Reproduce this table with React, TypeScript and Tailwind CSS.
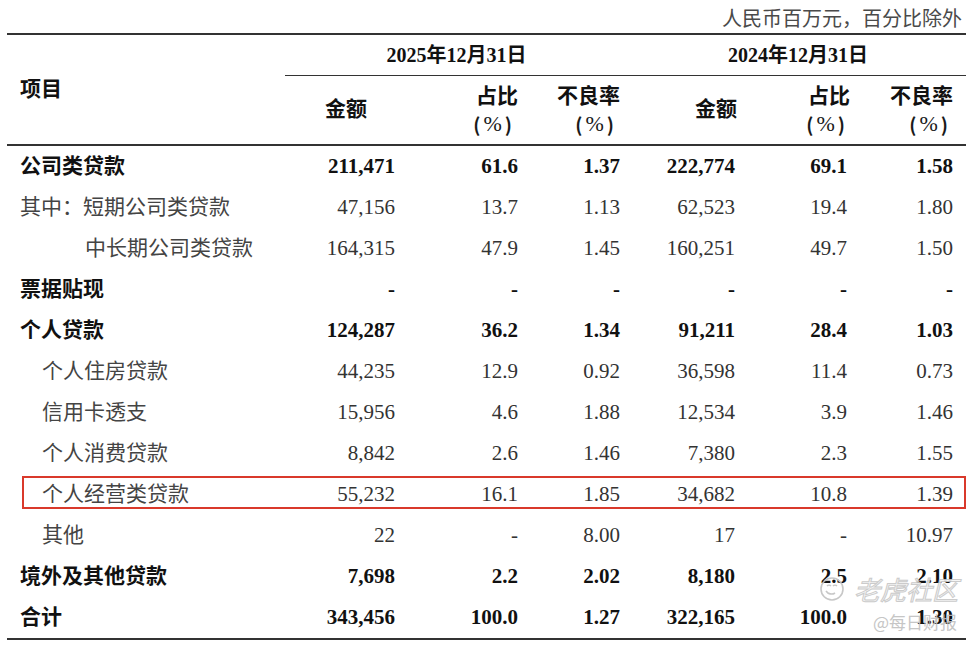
import React from "react";

type Row = {
  label: string;
  bold?: boolean;
  indent?: number;
  v: string[];
  highlight?: boolean;
};

const rows: Row[] = [
  { label: "公司类贷款", bold: true, v: ["211,471", "61.6", "1.37", "222,774", "69.1", "1.58"] },
  { label: "其中：短期公司类贷款", v: ["47,156", "13.7", "1.13", "62,523", "19.4", "1.80"] },
  { label: "中长期公司类贷款", indent: 2, v: ["164,315", "47.9", "1.45", "160,251", "49.7", "1.50"] },
  { label: "票据贴现", bold: true, v: ["-", "-", "-", "-", "-", "-"] },
  { label: "个人贷款", bold: true, v: ["124,287", "36.2", "1.34", "91,211", "28.4", "1.03"] },
  { label: "个人住房贷款", indent: 1, v: ["44,235", "12.9", "0.92", "36,598", "11.4", "0.73"] },
  { label: "信用卡透支", indent: 1, v: ["15,956", "4.6", "1.88", "12,534", "3.9", "1.46"] },
  { label: "个人消费贷款", indent: 1, v: ["8,842", "2.6", "1.46", "7,380", "2.3", "1.55"] },
  { label: "个人经营类贷款", indent: 1, highlight: true, v: ["55,232", "16.1", "1.85", "34,682", "10.8", "1.39"] },
  { label: "其他", indent: 1, v: ["22", "-", "8.00", "17", "-", "10.97"] },
  { label: "境外及其他贷款", bold: true, v: ["7,698", "2.2", "2.02", "8,180", "2.5", "2.10"] },
  { label: "合计", bold: true, v: ["343,456", "100.0", "1.27", "322,165", "100.0", "1.30"] },
];

const FONT = "font-['Liberation_Serif','Noto_Sans_CJK_SC',serif]";
const GRID = "grid grid-cols-[278px_110px_123px_102px_115px_112px_106px]";

function Pct({ pr }: { pr: string }) {
  return (
    <span className={`flex items-center text-[#1a1a1a] ${pr}`}>
      <span className="font-['Noto_Sans_CJK_SC',sans-serif] font-bold text-[19px] mr-[3px]">(</span>
      <span className="text-[22px] leading-[26px]">%</span>
      <span className="font-['Noto_Sans_CJK_SC',sans-serif] font-bold text-[19px] ml-[3px]">)</span>
    </span>
  );
}

function PctHeader({ title, shift = "", pr = "pr-[8px]" }: { title: string; shift?: string; pr?: string }) {
  return (
    <div className="flex flex-col items-end justify-center leading-[27px]">
      <span className={`font-bold text-[21px] text-[#111] ${shift}`}>{title}</span>
      <Pct pr={pr} />
    </div>
  );
}

export default function App() {
  return (
    <div className={`relative w-[975px] h-[645px] bg-white ${FONT} overflow-hidden`}>
      <div className="ml-[7px] w-[959px]">
        {/* caption */}
        <div className="h-[33px] flex items-center justify-end pr-[4px] pt-[2px] text-[20px] text-[#4a4a4a] font-['Noto_Sans_CJK_SC',sans-serif]">
          人民币百万元，百分比除外
        </div>

        {/* header */}
        <div className="flex border-t-2 border-b-2 border-[#333]">
          <div className="w-[278px] flex items-center pl-[13px] text-[21px] font-bold text-[#111]">项目</div>
          <div className="flex-1 flex flex-col">
            <div className="h-[41px] flex border-b border-[#333] text-[20px] font-bold text-[#111]">
              <div className="w-[335px] flex items-center justify-center pl-[8px]">2025年12月31日</div>
              <div className="flex-1 flex items-center justify-center pl-[10px]">2024年12月31日</div>
            </div>
            <div className="h-[68px] grid grid-cols-[110px_123px_102px_115px_112px_106px]">
              <div className="flex items-center justify-end pr-[28px] font-bold text-[21px] text-[#111]">金额</div>
              <PctHeader title="占比" pr="pr-[6px]" />
              <PctHeader title="不良率" pr="pr-[6px]" />
              <div className="flex items-center justify-end font-bold text-[21px] text-[#111]">
                <span className="mr-[-2px]">金额</span>
              </div>
              <PctHeader title="占比" shift="mr-[-3px]" pr="pr-[2px]" />
              <PctHeader title="不良率" pr="pr-[5px]" />
            </div>
          </div>
        </div>

        {/* body */}
        <div className="border-b-2 border-[#333]">
          {rows.map((r, i) => (
            <div key={i} className={`relative ${GRID} h-[41px] items-center pr-[13px]`}>
              <div
                className={`${
                  r.indent === 2 ? "pl-[78px]" : r.indent === 1 ? "pl-[35px]" : "pl-[13px]"
                } text-[21px] whitespace-nowrap ${r.bold ? "font-bold text-[#111]" : "text-[#444]"}`}
              >
                {r.label}
              </div>
              {r.v.map((v, j) => (
                <div
                  key={j}
                  className={`text-right text-[21px] ${r.bold ? "font-bold text-[#111]" : "text-[#333]"}`}
                >
                  {v}
                </div>
              ))}
              {r.highlight && (
                <div className="absolute left-[15px] right-0 top-[2px] bottom-[6px] border-2 border-[#d9392b]" />
              )}
            </div>
          ))}
        </div>
      </div>

      {/* watermark */}
      <div className="absolute left-[818px] top-[574px] flex items-center gap-[8px] opacity-90 pointer-events-none">
        <svg width="28" height="28" viewBox="0 0 28 28" fill="none" stroke="#c2c2c2" strokeWidth="1.6">
          <circle cx="14" cy="14" r="11" />
          <path d="M8 16c2 3 6 4 9 2M9 11c1-1 3-1 4 0M15 11c1-1 3-1 4 0" />
        </svg>
        <span className="text-[26px] leading-[30px] text-[#f6f6f6] [-webkit-text-stroke:1px_#c6c6c6] font-['Noto_Sans_CJK_SC',sans-serif] italic">
          老虎社区
        </span>
      </div>
      <div className="absolute left-[873px] top-[609px] text-[17px] text-[#c0c0c0] opacity-90 font-['Noto_Sans_CJK_SC',sans-serif] pointer-events-none">
        @每日财报
      </div>
    </div>
  );
}
